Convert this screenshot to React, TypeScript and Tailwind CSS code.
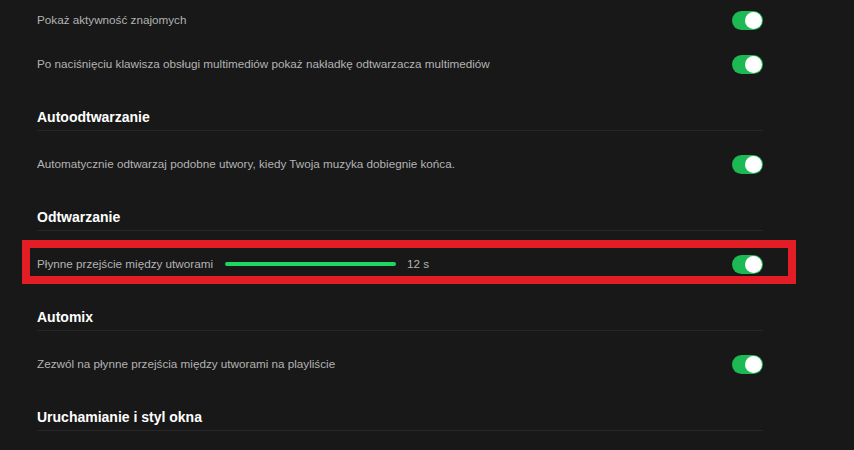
import React from "react";

function Toggle() {
  return (
    <div className="relative h-[19px] w-[31px] shrink-0 rounded-full bg-[#1db954]">
      <div className="absolute right-[1px] top-[1px] h-[17px] w-[17px] rounded-full bg-white" />
    </div>
  );
}

function Row({ label, children }: { label: string; children?: React.ReactNode }) {
  return (
    <div className="flex h-[44px] items-center justify-between">
      <div className="flex items-center text-[11.7px] text-[#b3b3b3]">
        <span>{label}</span>
        {children}
      </div>
      <Toggle />
    </div>
  );
}

function Heading({ title }: { title: string }) {
  return (
    <div className="border-b border-[#272727] pb-[3px] pt-[21px]">
      <h2 className="h-5 text-[14px] font-bold leading-5 text-white">{title}</h2>
    </div>
  );
}

export default function App() {
  return (
    <div
      className="h-[450px] w-[854px] overflow-hidden bg-[#181818]"
      style={{ fontFamily: '"Liberation Sans", Arial, sans-serif' }}
    >
      <div className="ml-[37px] w-[726px]">
        <div className="-mt-[2px]">
          <Row label="Pokaż aktywność znajomych" />
        </div>
        <Row label="Po naciśnięciu klawisza obsługi multimediów pokaż nakładkę odtwarzacza multimediów" />

        <Heading title="Autoodtwarzanie" />
        <div className="mt-[11px]">
          <Row label="Automatycznie odtwarzaj podobne utwory, kiedy Twoja muzyka dobiegnie końca." />
        </div>

        <Heading title="Odtwarzanie" />
        <div className="relative mt-[11px]">
          <Row label="Płynne przejście między utworami">
            <div className="ml-[12px] h-[4px] w-[171px] rounded-full bg-[#1ed760]" />
            <span className="ml-[11px]">12 s</span>
          </Row>
          <div className="pointer-events-none absolute -left-[15px] -top-[2px] h-[44px] w-[774px] border-[8px] border-[#e31d25]" />
        </div>

        <Heading title="Automix" />
        <div className="mt-[11px]">
          <Row label="Zezwól na płynne przejścia między utworami na playliście" />
        </div>

        <Heading title="Uruchamianie i styl okna" />
      </div>
    </div>
  );
}
